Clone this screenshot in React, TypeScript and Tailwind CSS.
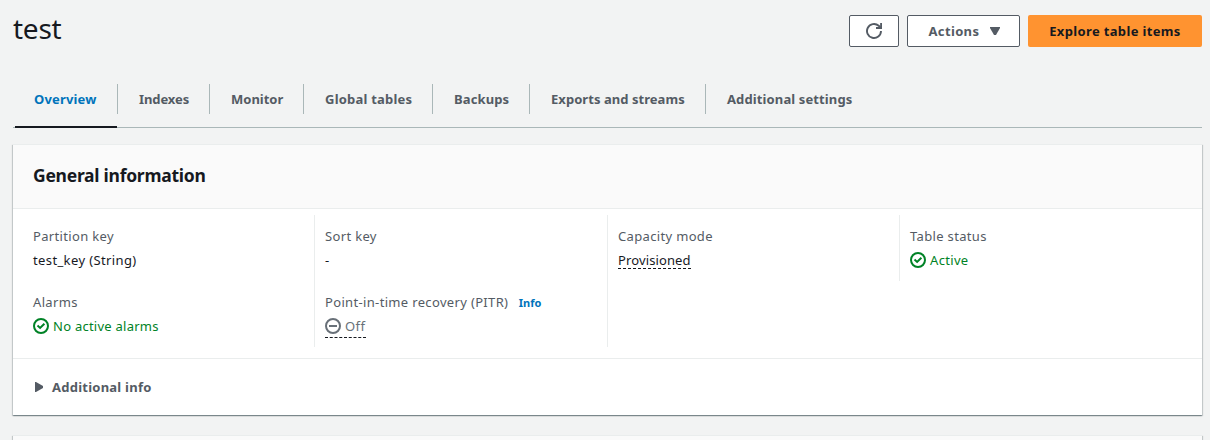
import type { ReactNode } from "react";

const tabs = [
  { label: "Overview", box: "w-[102px] pl-[19px]", text: "tracking-[0.15px]" },
  { label: "Indexes", box: "w-[92px] pl-[21px]", text: "tracking-[-0.1px]" },
  { label: "Monitor", box: "w-[94px] pl-[21px]", text: "" },
  { label: "Global tables", box: "w-[129px] pl-[21px]", text: "tracking-[0.22px]" },
  { label: "Backups", box: "w-[97px] pl-[21px]", text: "tracking-[0.12px]" },
  { label: "Exports and streams", box: "w-[176px] pl-[21px]", text: "tracking-[0.05px]" },
  { label: "Additional settings", box: "w-[170px] pl-[21px]", text: "tracking-[0.12px]" },
];

const panelShadow =
  "border-t border-[#eaeded] shadow-[0_1px_1px_0_rgba(0,28,36,0.3),1px_1px_1px_0_rgba(0,28,36,0.15),-1px_1px_1px_0_rgba(0,28,36,0.15)]";

function CheckIcon() {
  return (
    <svg className="mb-0.5 size-4 shrink-0" viewBox="0 0 16 16" fill="none" stroke="currentColor" strokeWidth="2">
      <circle cx="8" cy="8" r="7" />
      <path d="m4.5 7.6 2.6 2.3 4.3-4.2" />
    </svg>
  );
}

function OffIcon() {
  return (
    <svg className="mb-0.5 size-4 shrink-0" viewBox="0 0 16 16" fill="none" stroke="currentColor" strokeWidth="2">
      <circle cx="8" cy="8" r="7" />
      <path d="M4 8h8" />
    </svg>
  );
}

function Field({ label, extra, children }: { label: ReactNode; extra?: ReactNode; children: ReactNode }) {
  return (
    <div className="h-[66px] pt-[11px] text-[13px]">
      <div className="flex h-[22px] items-center whitespace-nowrap text-[#545b64]">
        <span className="tracking-[0.34px]">{label}</span>
        {extra}
      </div>
      <div className="mt-0.5 flex h-[22px] items-center whitespace-nowrap text-[#16191f]">{children}</div>
    </div>
  );
}

export default function App() {
  return (
    <div className="h-[440px] w-[1210px] overflow-hidden bg-[#f2f3f3] font-['Noto_Sans',sans-serif] text-[#16191f]">
      <header className="flex h-[84px] items-start justify-between pl-[13px] pr-2">
        <h1 className="mt-2.5 text-[28px] leading-9 tracking-[-0.25px]">test</h1>
        <div className="mt-[15px] flex h-8 gap-2 text-[13px] font-bold tracking-[0.35px]">
          <button className="flex w-[50px] items-center justify-center rounded-[2px] border border-[#545b64] bg-white text-[#545b64]">
            <svg className="size-4" viewBox="0 0 16 16" fill="none" stroke="currentColor" strokeWidth="1.9">
              <path d="M15 8a7 7 0 1 1-2.3-5.2L14.6 4.6" />
              <path d="M15.1 0v5H10" />
            </svg>
          </button>
          <button className="flex w-[113px] items-center rounded-[2px] border border-[#545b64] bg-white pl-[20.5px] text-[#545b64]">
            <span className="w-[61.5px] pt-px text-left">Actions</span>
            <svg className="h-2 w-2.5" viewBox="0 0 10 8" fill="currentColor">
              <path d="M0 0h10v1L6 8H4L0 1z" />
            </svg>
          </button>
          <button className="w-[174px] whitespace-nowrap rounded-[2px] bg-[#ff9330] pt-0.5">Explore table items</button>
        </div>
      </header>

      <nav className="ml-[13px] mr-2 flex h-11 border-b border-[#aab7b8] pl-0.5">
        {tabs.map((tab, i) => (
          <div key={tab.label} className={`${tab.box} h-11 shrink-0 ${i === 0 ? "-mb-px border-b-2 border-[#16191f] text-[#0073bb]" : "text-[#545b64]"}`}>
            <div className={`${i > 0 ? "-ml-[21px] border-l border-[#aab7b8] pl-[21px]" : ""} flex h-[30px] items-center whitespace-nowrap pt-0.5 text-[13px] font-bold`}>
              <span className={tab.text}>{tab.label}</span>
            </div>
          </div>
        ))}
      </nav>

      <main className="pl-[13px] pr-2 pt-4">
        <section className={`h-[271px] bg-white ${panelShadow}`}>
          <div className="flex h-16 items-center border-b border-[#eaeded] bg-[#fafafa] pb-[3px] pl-5">
            <h2 className="text-[17.5px] font-bold leading-[22px] tracking-[-0.26px]">General information</h2>
          </div>
          <div className="grid h-[150px] grid-cols-[301px_293px_292px_1fr] items-start border-b border-[#eaeded] pt-[6px]">
            <div className="h-[132px] pl-5">
              <Field label="Partition key"><span className="tracking-[0.38px]">test_key (String)</span></Field>
              <Field label="Alarms">
                <span className="flex items-center gap-1 tracking-[0.25px] text-[#008226]"><CheckIcon />No active alarms</span>
              </Field>
            </div>
            <div className="h-[132px] border-l border-[#eaeded] pl-2.5">
              <Field label="Sort key">-</Field>
              <Field label="Point-in-time recovery (PITR)" extra={<span className="ml-[10.5px] text-[11px] font-bold text-[#0073bb]">Info</span>}>
                <span className="flex h-[22px] w-[41px] shrink-0 items-center gap-1 border-b border-dashed border-[#16191f] pt-px tracking-[0.4px] text-[#687078]">
                  <OffIcon />Off
                </span>
              </Field>
            </div>
            <div className="h-[132px] border-l border-[#eaeded] pl-2.5">
              <Field label="Capacity mode">
                <span className="-mt-0.5 h-[18px] border-b border-dashed border-[#16191f] leading-[18px] tracking-[0.12px]">Provisioned</span>
              </Field>
            </div>
            <div className="h-[66px] border-l border-[#eaeded] pl-2.5">
              <Field label="Table status">
                <span className="flex items-center gap-1 tracking-[0.33px] text-[#008226]"><CheckIcon />Active</span>
              </Field>
            </div>
          </div>
          <div className="flex h-14 items-center pl-[22px] text-[13px] font-bold tracking-[0.24px] text-[#545b64]">
            <svg className="mr-[9px] h-2.5 w-2" viewBox="0 0 8 10" fill="currentColor">
              <path d="M0 0h1l7 4v2l-7 4H0z" />
            </svg>
            <span className="pt-0.5">Additional info</span>
          </div>
        </section>
        <section className={`mt-5 h-10 bg-[#fafafa] ${panelShadow}`} />
      </main>
    </div>
  );
}
